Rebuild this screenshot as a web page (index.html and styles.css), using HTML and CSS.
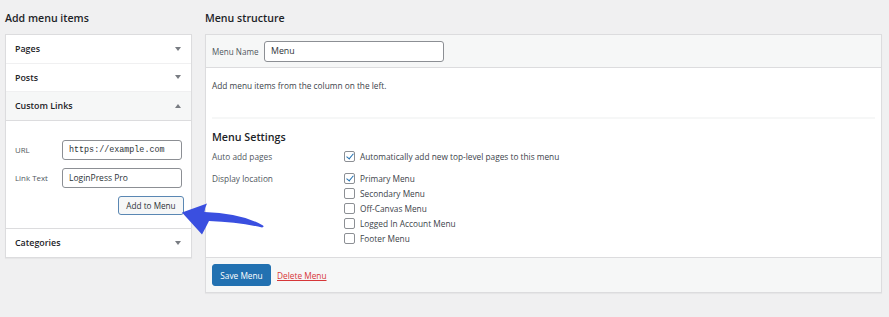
FILE: index.html
```html
<!DOCTYPE html>
<html>
<head>
<meta charset="utf-8">
<link rel="stylesheet" href="styles.css">
</head>
<body>
<div class="page">
  <div class="col-left">
    <h2 class="col-title">Add menu items</h2>
    <div class="accordion">
      <div class="acc-head"><span>Pages</span><span class="tri down"></span></div>
      <div class="acc-head"><span>Posts</span><span class="tri down"></span></div>
      <div class="acc-head open"><span>Custom Links</span><span class="tri up"></span></div>
      <div class="acc-body">
        <div class="field-row"><label>URL</label><div class="input mono">https://example.com</div></div>
        <div class="field-row"><label>Link Text</label><div class="input">LoginPress Pro</div></div>
        <div class="btn-row"><button class="btn-secondary">Add to Menu</button></div>
      </div>
      <div class="acc-head last"><span>Categories</span><span class="tri down"></span></div>
    </div>
  </div>
  <div class="col-right">
    <h2 class="col-title">Menu structure</h2>
    <div class="menu-box">
      <div class="menu-head">
        <label>Menu Name</label>
        <div class="input name-input">Menu</div>
      </div>
      <div class="menu-body">
        <p class="hint">Add menu items from the column on the left.</p>
        <div class="sep"></div>
        <h3 class="settings-title">Menu Settings</h3>
        <div class="setting">
          <div class="set-label">Auto add pages</div>
          <div class="set-opts">
            <div class="opt"><span class="cb checked"></span>Automatically add new top-level pages to this menu</div>
          </div>
        </div>
        <div class="setting loc">
          <div class="set-label">Display location</div>
          <div class="set-opts">
            <div class="opt"><span class="cb checked"></span>Primary Menu</div>
            <div class="opt"><span class="cb"></span>Secondary Menu</div>
            <div class="opt"><span class="cb"></span>Off-Canvas Menu</div>
            <div class="opt"><span class="cb"></span>Logged In Account Menu</div>
            <div class="opt"><span class="cb"></span>Footer Menu</div>
          </div>
        </div>
      </div>
      <div class="menu-foot">
        <button class="btn-primary">Save Menu</button>
        <a class="delete" href="#">Delete Menu</a>
      </div>
    </div>
  </div>
  <svg class="arrow" width="90" height="40" viewBox="0 0 90 40">
    <path d="M1 12.5 L26 3.5 Q23.5 8.5 23.5 12 Q60 13 82 25.5 Q83.5 27 81 27.5 Q58 22 28 21 Q25 27 21 34.5 Z" fill="#3a4fe0"/>
  </svg>
</div>
</body>
</html>
```
FILE: styles.css
```css
* { box-sizing: border-box; }
html, body { margin: 0; padding: 0; }
body {
  background: #f0f0f1;
  font-family: "Open Sans", "Noto Sans", sans-serif;
  color: #1d2327;
  width: 889px;
  height: 317px;
  overflow: hidden;
}
.page {
  position: relative;
  display: flex;
  gap: 13px;
  padding: 0 7px 0 5px;
}
.col-left { width: 187px; flex: none; }
.col-right { flex: 1; }
.col-title {
  margin: 0;
  height: 34px;
  line-height: 36px;
  font-size: 10.6px;
  font-weight: 600;
  color: #1d2327;
}
.accordion {
  background: #fff;
  border: 1px solid #dcdcde;
  box-shadow: 0 1px 1px rgba(0,0,0,.04);
}
.acc-head {
  height: 28.5px;
  display: flex;
  align-items: center;
  justify-content: space-between;
  padding: 0 10px 0 9px;
  font-size: 8.9px;
  font-weight: 600;
  border-bottom: 1px solid #f0f0f1;
}
.acc-head.open { background: #f6f7f7; border-bottom: 1px solid #dcdcde; }
.acc-head.last { border-bottom: none; }
.tri { width: 0; height: 0; border-left: 3px solid transparent; border-right: 3px solid transparent; }
.tri.down { border-top: 4px solid #787c82; }
.tri.up { border-bottom: 4px solid #787c82; }
.acc-body {
  height: 108px;
  padding: 19px 9px 0 9px;
  border-bottom: 1px solid #dcdcde;
}
.field-row {
  display: flex;
  align-items: center;
  margin-bottom: 8px;
}
.field-row label {
  width: 47px;
  font-size: 7.9px;
  color: #50575e;
}
.input {
  border: 1px solid #8c8f94;
  border-radius: 3px;
  background: #fff;
  height: 20px;
  line-height: 18px;
  padding: 0 6px;
  font-size: 8.5px;
  color: #2c3338;
}
.field-row .input { width: 120px; }
.mono { font-family: "Liberation Mono", "DejaVu Sans Mono", monospace; font-size: 8.4px; }
.btn-row { display: flex; justify-content: flex-end; margin-top: 2px; margin-right: -2px; }
.btn-secondary {
  height: 19px;
  width: 66px;
  padding: 0;
  background: #f6f7f7;
  border: 1px solid #5a87b3;
  border-radius: 3px;
  font-family: inherit;
  font-size: 8.2px;
  color: #2c3338;
}
.menu-box {
  background: #fff;
  border: 1px solid #dcdcde;
  box-shadow: 0 1px 1px rgba(0,0,0,.04);
}
.menu-head {
  height: 33px;
  background: #f6f7f7;
  border-bottom: 1px solid #dcdcde;
  display: flex;
  align-items: center;
  padding: 0 6px;
}
.menu-head label { font-size: 8.1px; color: #50575e; width: 52px; }
.name-input { width: 180px; font-size: 8.8px; padding: 0 6px; height: 21px; line-height: 19px; }
.menu-body { padding: 0 6px; height: 189px; }
.hint { margin: 0; padding-top: 12px; height: 49px; font-size: 8.3px; color: #3c434a; line-height: 12px; }
.sep { height: 2px; background: #f6f7f7; margin-right: 0; }
.settings-title { margin: 0; padding-top: 11px; height: 30px; font-size: 10.7px; font-weight: 600; line-height: 14px; }
.setting { display: flex; }
.set-label { width: 132px; font-size: 8.3px; color: #50575e; line-height: 15px; }
.setting.loc { margin-top: 7px; }
.opt { display: flex; align-items: center; height: 15px; font-size: 8.3px; color: #3c434a; }
.cb {
  width: 11px; height: 11px;
  border: 1px solid #8c8f94;
  border-radius: 2px;
  margin-right: 5px;
  position: relative;
  background: #fff;
}
.cb.checked::after {
  content: "";
  position: absolute;
  left: 3px; top: 0px;
  width: 3px; height: 6px;
  border: solid #2271b1;
  border-width: 0 1.5px 1.5px 0;
  transform: rotate(40deg);
}
.menu-foot {
  height: 35px;
  background: #f6f7f7;
  border-top: 1px solid #dcdcde;
  display: flex;
  align-items: center;
  padding: 0 6px;
  gap: 6px;
}
.btn-primary {
  height: 22px;
  width: 59px;
  padding: 0;
  background: #2271b1;
  border: 1px solid #2271b1;
  border-radius: 3px;
  color: #fff;
  font-family: inherit;
  font-size: 8.3px;
}
.delete { color: #d63638; font-size: 8.3px; text-decoration: underline; }
.arrow { position: absolute; left: 181px; top: 200px; }
```
